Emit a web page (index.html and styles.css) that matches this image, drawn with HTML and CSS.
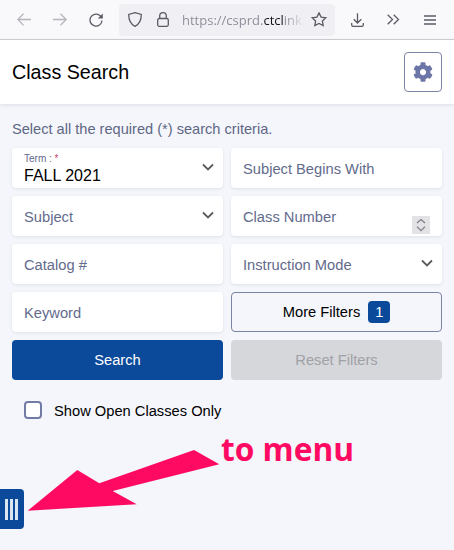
FILE: index.html
```html
<!DOCTYPE html>
<html lang="en">
<head>
<meta charset="utf-8">
<title>Class Search</title>
<link rel="stylesheet" href="styles.css">
</head>
<body>
<div class="toolbar">
  <svg class="ic-nav dim" viewBox="0 0 14 14"><path d="M14 6.500H.8M6.500.8.8 6.500l5.700 5.700"/></svg>
  <svg class="ic-nav dim gap-nav" viewBox="0 0 14 14"><path d="M0 6.500h13.200M7.500.8l5.700 5.700-5.700 5.700"/></svg>
  <svg class="ic-nav gap-nav" viewBox="0 0 14 14"><path d="M13 7.500A6 6 0 1 1 10.500 2.200L12.500 4"/><path class="fill" d="M13.800.6v5H8.800z"/></svg>
  <div class="urlbar">
    <svg class="ic-shield" viewBox="0 0 14 15"><path d="M7 .7 13.300 2.500c0 6-1.500 9.500-6.300 11.800C2.200 12 .7 8.500.7 2.500z"/></svg>
    <svg class="ic-lock" viewBox="0 0 12 15"><rect x=".7" y="6.500" width="10.600" height="7.800" rx="1.500"/><path d="M2.700 6.500V4a3.300 3.300 0 0 1 6.600 0v2.500"/></svg>
    <div class="url-text">https://csprd.<b>ctcl</b>ink.</div>
    <svg class="ic-star" viewBox="0 0 16 15"><path d="m8 .9 2.100 4.200 4.700.7-3.400 3.200.8 4.600L8 11.400l-4.200 2.200.8-4.600L1.200 5.800l4.700-.7z"/></svg>
  </div>
  <svg class="ic-dl" viewBox="0 0 13 14"><path d="M6.500.3v9.700M2.700 6.200l3.800 3.800 3.800-3.800M.7 10v2a1.300 1.300 0 0 0 1.300 1.300h9a1.300 1.300 0 0 0 1.300-1.300v-2"/></svg>
  <svg class="ic-more" viewBox="0 0 13 11"><path d="m.7.7 4.800 4.800-4.800 4.800M6.700.7l4.800 4.800-4.800 4.800"/></svg>
  <svg class="ic-burger" viewBox="0 0 12 10"><path d="M0 1h12M0 5h12M0 9h12"/></svg>
</div>

<header class="page-head">
  <h1 class="page-title">Class Search</h1>
  <button class="gear-btn" type="button" aria-label="Settings">
    <svg viewBox="0 0 512 512"><path d="M487.400 315.700l-42.600-24.600c4.300-23.200 4.300-47 0-70.200l42.600-24.600c4.900-2.800 7.100-8.600 5.500-14-11.100-35.600-30-67.800-54.700-94.600-3.800-4.100-10-5.100-14.800-2.300L380.800 110c-17.900-15.400-38.500-27.300-60.800-35.100V25.800c0-5.600-3.900-10.500-9.400-11.700-36.700-8.200-74.300-7.800-109.200 0-5.500 1.200-9.400 6.100-9.400 11.700V75c-22.200 7.900-42.800 19.800-60.800 35.100L88.700 85.500c-4.900-2.800-11-1.900-14.800 2.300-24.700 26.700-43.600 58.900-54.700 94.600-1.700 5.400.6 11.200 5.500 14L67.300 221c-4.300 23.200-4.300 47 0 70.200l-42.600 24.600c-4.900 2.800-7.100 8.600-5.500 14 11.100 35.600 30 67.800 54.700 94.600 3.800 4.100 10 5.100 14.800 2.300l42.600-24.600c17.900 15.400 38.500 27.300 60.800 35.100v49.200c0 5.600 3.900 10.500 9.400 11.700 36.700 8.200 74.300 7.800 109.200 0 5.500-1.200 9.400-6.100 9.400-11.700v-49.200c22.200-7.900 42.800-19.800 60.800-35.100l42.600 24.600c4.900 2.800 11 1.900 14.800-2.300 24.700-26.700 43.600-58.900 54.700-94.600 1.500-5.500-.7-11.300-5.600-14.100zM256 336c-44.100 0-80-35.900-80-80s35.900-80 80-80 80 35.900 80 80-35.900 80-80 80z"/></svg>
  </button>
</header>

<main class="content">
  <p class="intro">Select all the required (*) search criteria.</p>
  <div class="form-grid">
    <div class="field select">
      <div class="term-value">
        <span class="term-label">Term : <span class="req">*</span></span>
        <span class="term-text">FALL 2021</span>
      </div>
      <svg class="chev" viewBox="0 0 12 8"><path d="M1 1.500 6 6.500l5-5"/></svg>
    </div>
    <div class="field"><span class="ph">Subject Begins With</span></div>

    <div class="field select"><span class="ph">Subject</span><svg class="chev" viewBox="0 0 12 8"><path d="M1 1.500 6 6.500l5-5"/></svg></div>
    <div class="field">
      <span class="ph">Class Number</span>
      <span class="spinner">
        <svg viewBox="0 0 18 18"><path d="m5 7 4-3.500L13 7M5 10.700l4 4 4-4"/></svg>
      </span>
    </div>

    <div class="field"><span class="ph">Catalog #</span></div>
    <div class="field select"><span class="ph">Instruction Mode</span><svg class="chev" viewBox="0 0 12 8"><path d="M1 1.500 6 6.500l5-5"/></svg></div>

    <div class="field"><span class="ph">Keyword</span></div>
    <button class="btn outline" type="button">More Filters <span class="badge">1</span></button>

    <button class="btn primary" type="button">Search</button>
    <button class="btn disabled" type="button">Reset Filters</button>
  </div>
  <label class="check-row"><span class="check"></span><span class="check-text">Show Open Classes Only</span></label>
</main>

<button class="menu-tab" type="button" aria-label="Menu"><span></span><span></span><span></span></button>

<svg class="arrow" viewBox="0 0 454 550"><polygon points="27.700,510.700 77.300,470 99.300,483.300 194,450 219.300,464.300 112.700,491 136.700,504.300"/></svg>
<div class="annotation">to menu</div>
</body>
</html>
```

FILE: styles.css
```css
* { box-sizing: border-box; }
body {
  margin: 0;
  height: 550px;
  overflow: hidden;
  position: relative;
  background: #f4f6fb;
  font-family: "Liberation Sans", Arial, sans-serif;
  font-size: 14.700px;
  color: #000;
}
.toolbar {
  height: 40px;
  background: #f9f9fb;
  border-bottom: 1px solid #cfcfd3;
  display: flex;
  align-items: center;
  padding-left: 17px;
}
.toolbar svg { flex: none; fill: none; stroke: #5b5b66; stroke-width: 1.300; }
.ic-nav { width: 14px; height: 14px; }
.toolbar .dim { stroke: #b5b5bb; }
.gap-nav { margin-left: 22px; }
.toolbar .fill { fill: #5b5b66; stroke: none; }
.urlbar {
  margin-left: 16px;
  width: 216px;
  height: 32px;
  background: #f0f0f4;
  border-radius: 4px;
  display: flex;
  align-items: center;
  padding-left: 9px;
  flex: none;
}
.ic-shield { width: 14px; height: 15px; }
.ic-lock { width: 12px; height: 15px; margin-left: 15px; }
.url-text {
  margin-left: 13px;
  width: 126px;
  white-space: nowrap;
  color: #8f8f9d;
  font-family: "Open Sans", sans-serif;
  font-size: 13px;
  -webkit-mask-image: linear-gradient(to right, #000 82%, transparent 97%);
  mask-image: linear-gradient(to right, #000 82%, transparent 97%);
}
.url-text b { color: #15141a; font-weight: 400; }
.ic-star { width: 16px; height: 15px; margin-left: 3px; }
.ic-dl { width: 13px; height: 14px; margin-left: 16px; }
.ic-more { width: 13px; height: 11px; margin-left: 23px; }
.ic-burger { width: 12px; height: 10px; margin-left: 24px; }

.page-head {
  height: 64px;
  background: #fff;
  box-shadow: 0 1px 4px rgba(40, 50, 90, .12);
  display: flex;
  align-items: center;
  justify-content: space-between;
  padding: 0 12px;
}
.page-title { margin: 0; font-size: 19.700px; font-weight: 400; }
.gear-btn {
  width: 38px;
  height: 40px;
  padding: 0;
  background: #fff;
  border: 1px solid #7a84a3;
  border-radius: 4px;
  display: flex;
  align-items: center;
  justify-content: center;
}
.gear-btn svg { width: 20px; height: 20px; fill: #6c76a6; }

.content { padding: 16px 12px 0; }
.intro { margin: 0 0 10px; line-height: 18px; color: #5f6785; font-size: 14.600px; }
.form-grid {
  display: grid;
  grid-template-columns: 211px 211px;
  grid-auto-rows: 40px;
  gap: 8px;
}
.field {
  background: #fff;
  border-radius: 4px;
  box-shadow: 0 1px 3px rgba(40, 50, 90, .1);
  padding: 0 12px;
  display: flex;
  align-items: center;
  justify-content: space-between;
  position: relative;
}
.ph { color: #636b8c; padding-top: 2px; }
.field.select { padding-right: 9px; }
.chev { width: 12px; height: 8px; fill: none; stroke: #5c5c5c; stroke-width: 1.800; margin-top: -2px; }
.term-value { display: flex; flex-direction: column; margin-top: 3px; }
.term-label { font-size: 10px; line-height: 10px; color: #636b8c; }
.req { color: #c2456b; }
.term-text { font-size: 16px; line-height: 19px; margin-top: 2px; color: #000; }
.spinner {
  position: absolute;
  right: 12px;
  bottom: 2px;
  width: 18px;
  height: 18px;
  background: #e3e3e6;
}
.spinner svg { display: block; width: 18px; height: 18px; fill: none; stroke: #7d7d85; stroke-width: 1.200; }
.btn {
  border-radius: 4px;
  font: inherit;
  padding: 0;
  display: flex;
  align-items: center;
  justify-content: center;
}
.btn.outline { background: transparent; border: 1px solid #7a84a3; color: #000; }
.btn.primary { background: #0b4a9b; border: 0; color: #fff; }
.btn.disabled { background: #d6d7db; border: 0; color: #a0a1a6; }
.badge {
  margin-left: 8px;
  width: 22px;
  height: 22px;
  background: #0b4a9b;
  color: #fff;
  border-radius: 4px;
  display: flex;
  align-items: center;
  justify-content: center;
}
.check-row {
  margin: 20px 0 0 12px;
  display: flex;
  align-items: center;
  gap: 12px;
  line-height: 18px;
}
.check-text { padding-top: 2px; }
.check {
  width: 18px;
  height: 18px;
  border: 2px solid #727ba6;
  border-radius: 4px;
  background: #fff;
}
.menu-tab {
  position: absolute;
  left: 0;
  top: 489px;
  width: 24px;
  height: 40px;
  padding: 0 1px 0 0;
  border: 0;
  background: #0b4a9b;
  border-radius: 0 4px 4px 0;
  display: flex;
  align-items: center;
  justify-content: center;
  gap: 2px;
}
.menu-tab span { width: 3px; height: 21px; background: #dbe4f2; }
.arrow { position: absolute; inset: 0; width: 454px; height: 550px; fill: #ff0a62; pointer-events: none; }
.annotation {
  position: absolute;
  left: 221px;
  top: 428px;
  color: #ff0a62;
  font-family: "Open Sans", sans-serif;
  font-weight: 700;
  font-size: 31.700px;
  line-height: 41px;
  white-space: nowrap;
}
```
